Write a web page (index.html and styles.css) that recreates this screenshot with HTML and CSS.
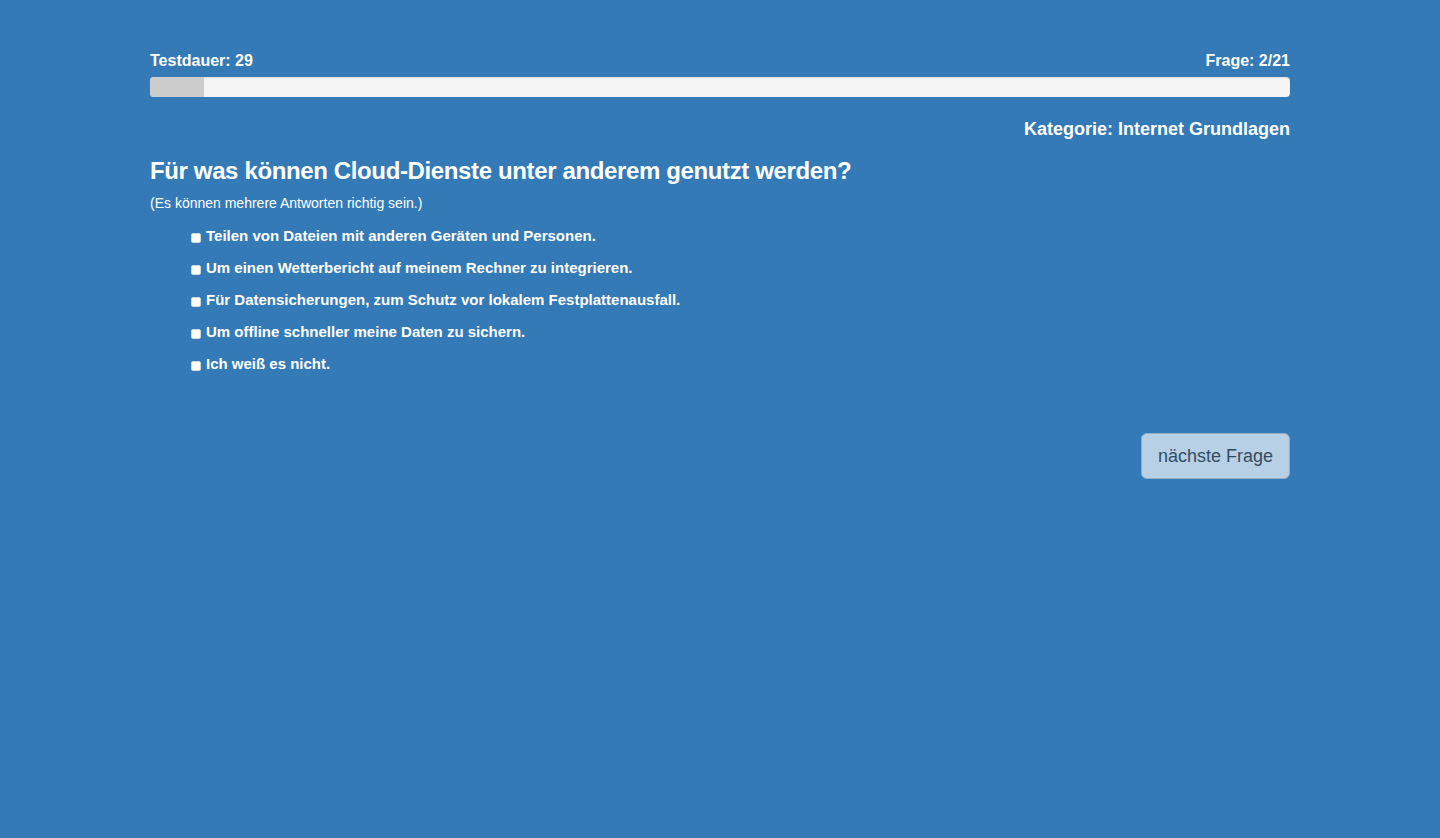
FILE: index.html
```html
<!DOCTYPE html>
<html lang="de">
<head>
<meta charset="utf-8">
<title>Test</title>
<link rel="stylesheet" href="styles.css">
</head>
<body>
<div class="container">
  <div class="status">
    <span>Testdauer: 29</span>
    <span>Frage: 2/21</span>
  </div>
  <div class="progress"><div class="progress-bar" style="width: 4.76%"></div></div>
  <div class="category">Kategorie: Internet Grundlagen</div>
  <h3 class="question">Für was können Cloud-Dienste unter anderem genutzt werden?</h3>
  <p class="hint">(Es können mehrere Antworten richtig sein.)</p>
  <ul class="answers">
    <li><label><input type="checkbox"><span>Teilen von Dateien mit anderen Geräten und Personen.</span></label></li>
    <li><label><input type="checkbox"><span>Um einen Wetterbericht auf meinem Rechner zu integrieren.</span></label></li>
    <li><label><input type="checkbox"><span>Für Datensicherungen, zum Schutz vor lokalem Festplattenausfall.</span></label></li>
    <li><label><input type="checkbox"><span>Um offline schneller meine Daten zu sichern.</span></label></li>
    <li><label><input type="checkbox"><span>Ich weiß es nicht.</span></label></li>
  </ul>
  <div class="actions">
    <button class="btn" disabled>nächste Frage</button>
  </div>
</div>
</body>
</html>
```
FILE: styles.css
```css
* { box-sizing: border-box; }
html, body {
  margin: 0;
  height: 100%;
}
body {
  background: #337ab7;
  color: #fff;
  font-family: "Liberation Sans", Arial, Helvetica, sans-serif;
  font-size: 14px;
  line-height: 20px;
}
.container {
  width: 1170px;
  margin: 0 auto;
  padding: 50px 15px 0;
}
.status {
  display: flex;
  justify-content: space-between;
  font-weight: bold;
  font-size: 16px;
  line-height: 22px;
}
.progress {
  margin-top: 5px;
  height: 20px;
  background: #f5f5f5;
  border-radius: 4px;
  overflow: hidden;
  box-shadow: inset 0 1px 2px rgba(0,0,0,0.1);
}
.progress-bar {
  height: 100%;
  background: #ccc;
}
.category {
  margin-top: 20px;
  text-align: right;
  font-weight: bold;
  font-size: 18px;
  line-height: 24px;
}
.question {
  margin: 15px 0 0;
  font-size: 24px;
  line-height: 30px;
  font-weight: bold;
  letter-spacing: -0.37px;
}
.hint {
  margin: 7px 0 0;
  font-size: 14px;
  line-height: 20px;
}
.answers {
  list-style: none;
  margin: 13px 0 0;
  padding: 0 0 0 41px;
}
.answers li {
  display: flex;
  height: 20px;
  margin-bottom: 12px;
  font-weight: bold;
  font-size: 15px;
  line-height: 20px;
}
.answers label {
  display: flex;
  align-items: center;
  gap: 5px;
}
.answers input {
  appearance: none;
  -webkit-appearance: none;
  margin: 3px 0 0 0;
  width: 10px;
  height: 10px;
  background: #fff;
  border: 1px solid #d6d6d6;
  border-radius: 2px;
}
.actions {
  display: flex;
  justify-content: flex-end;
  margin-top: 59px;
}
.btn {
  font-family: inherit;
  font-size: 18px;
  line-height: 24px;
  padding: 10px 16px;
  white-space: nowrap;
  border: 1px solid #ccc;
  border-radius: 6px;
  background: #fff;
  color: #333;
  opacity: 0.65;
}
```
